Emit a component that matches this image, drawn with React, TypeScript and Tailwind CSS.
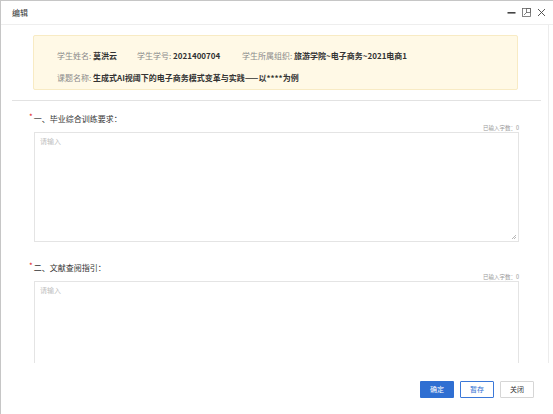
import React from 'react';

const font = { fontFamily: '"Noto Sans CJK SC", "Noto Sans", sans-serif' };

function InfoItem({ label, value }: { label: string; value: string }) {
    return (
        <span className="whitespace-nowrap">
            <span className="text-[#8a8a8a]">{label}: </span>
            <span className="font-bold text-[#333]">{value}</span>
        </span>
    );
}

function Section({ title }: { title: string }) {
    return (
        <div className="pl-[28px] pr-[29px]">
            <div className="flex items-center h-[14px] text-[8px] text-[#333]">
                <span className="text-[#e02020] text-[8px] leading-none -mt-[4px] mr-[1px]">*</span>
                {title}
            </div>
            <div className="flex justify-end h-[6px] items-center text-[5.5px] text-[#999] -mt-[1px]">已输入字数：0</div>
            <div className="relative mt-[1px] ml-[5px] h-[110px] border border-[#e4e4e4] bg-white">
                <div className="pl-[5px] pt-[3px] text-[7px] text-[#c0c0c0]">请输入</div>
                <svg className="absolute right-[2px] bottom-[2px]" width="5" height="5" viewBox="0 0 5 5">
                    <path d="M1 5 L5 1 M3 5 L5 3" stroke="#999" strokeWidth="0.7" />
                </svg>
            </div>
        </div>
    );
}

export default function App() {
    return (
        <div style={font} className="w-[553px] h-[414px] bg-white border-t border-l border-[#c6c6c6] flex flex-col overflow-hidden">
            {/* Header */}
            <div className="h-[24px] flex-shrink-0 flex items-center justify-between pl-[11px] pr-[7px] border-b border-[#eeeeee]">
                <span className="text-[8px] text-[#333]">编辑</span>
                <div className="flex items-center gap-[6px]">
                    <svg width="9" height="9" viewBox="0 0 9 9"><rect x="0.5" y="4" width="8" height="1.6" fill="#444" /></svg>
                    <svg width="9" height="9" viewBox="0 0 9 9">
                        <rect x="0.5" y="0.5" width="8" height="8" fill="none" stroke="#666" strokeWidth="0.8" />
                        <rect x="4.5" y="0.5" width="4" height="4" fill="none" stroke="#666" strokeWidth="0.8" />
                        <path d="M2 7 L5 4" stroke="#666" strokeWidth="0.8" />
                    </svg>
                    <svg width="9" height="9" viewBox="0 0 9 9"><path d="M1 1 L8 8 M8 1 L1 8" stroke="#444" strokeWidth="0.9" /></svg>
                </div>
            </div>

            {/* Body */}
            <div className="flex-1 overflow-hidden">
                <div className="w-[548px] h-full border-r border-[#ececec] pt-[10px]">
                    <div className="ml-[32px] w-[485px] h-[55px] bg-[#fff9e6] border border-[#f8ebc4] rounded-[2px] pl-[23px] pt-[9px] text-[8px] leading-[22px]">
                        <div className="flex">
                            <div className="w-[80px]"><InfoItem label="学生姓名" value="莫洪云" /></div>
                            <div className="w-[105px]"><InfoItem label="学生学号" value="2021400704" /></div>
                            <InfoItem label="学生所属组织" value="旅游学院~电子商务~2021电商1" />
                        </div>
                        <InfoItem label="课题名称" value="生成式AI视阈下的电子商务模式变革与实践——以****为例" />
                    </div>

                    <div className="mx-[11px] mt-[10px] border-t border-[#e2e2e2] w-[529px]" />

                    <div className="mt-[11px]">
                        <Section title="一、毕业综合训练要求：" />
                    </div>
                    <div className="mt-[19px]">
                        <Section title="二、文献查阅指引：" />
                    </div>
                </div>
            </div>

            {/* Footer */}
            <div className="h-[51px] flex-shrink-0 flex items-start justify-end gap-[6px] pt-[18px] pr-[19px] text-[7px]">
                <button className="w-[34px] h-[17px] bg-[#2f6fd2] text-white rounded-[1px]">确定</button>
                <button className="w-[34px] h-[17px] border border-[#3b78d8] text-[#2f6fd2] bg-white rounded-[1px]">暂存</button>
                <button className="w-[34px] h-[17px] border border-[#d6d6d6] text-[#333] bg-white rounded-[1px]">关闭</button>
            </div>
        </div>
    );
}
